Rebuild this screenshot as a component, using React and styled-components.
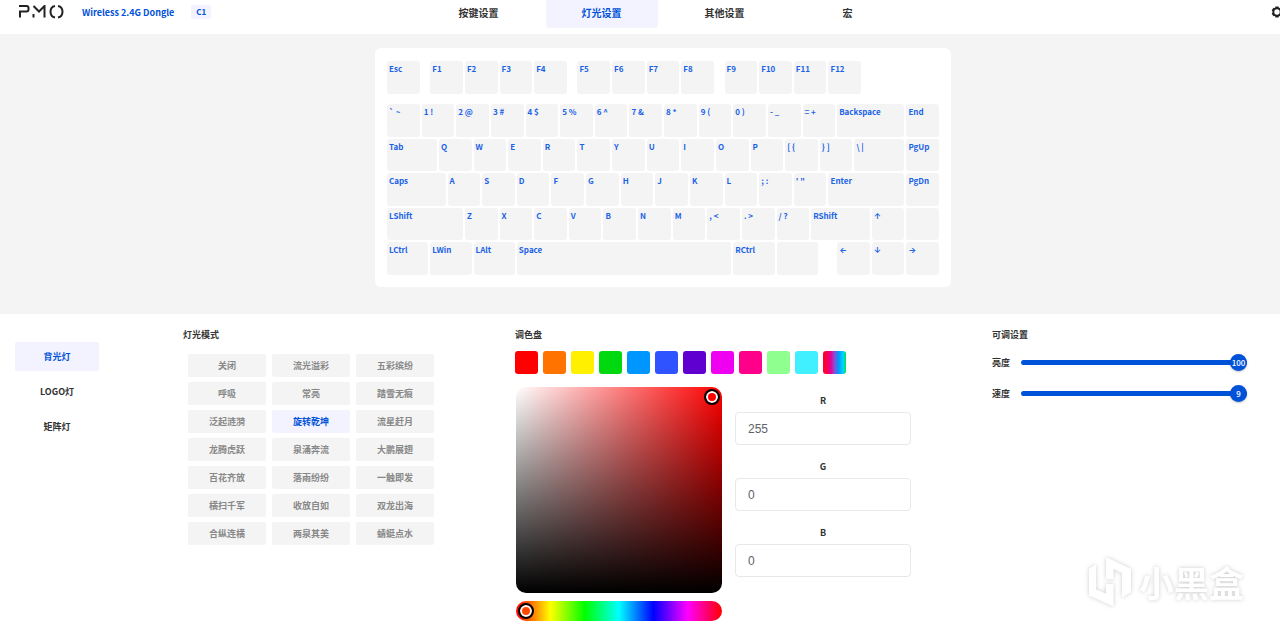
import React, { useState } from 'react'
import styled, { createGlobalStyle } from 'styled-components'

const NAV = ['按键设置', '灯光设置', '其他设置', '宏']

const ZONES = ['背光灯', 'LOGO灯', '矩阵灯']

const MODES = [
  '关闭', '流光溢彩', '五彩缤纷',
  '呼吸', '常亮', '踏雪无痕',
  '泛起涟漪', '旋转乾坤', '流星赶月',
  '龙腾虎跃', '泉涌奔流', '大鹏展翅',
  '百花齐放', '落雨纷纷', '一触即发',
  '横扫千军', '收放自如', '双龙出海',
  '合纵连横', '两泉其美', '蜻蜓点水',
]

const SWATCHES = [
  '#ff0000', '#ff7300', '#fff000', '#00d90f', '#0096ff', '#2f54ff',
  '#6000d0', '#f000f0', '#ff008a', '#8fff8f', '#40f0ff',
  'linear-gradient(90deg, #ff0030 10%, #e000a0 35%, #8a50d0 50%, #0096ff 68%, #00d8ff 88%, #00e060 98%)',
]

// [label, width in quarter units], a null label is an empty space
const FUNCTION_ROW = [
  ['Esc', 4], [null, 1], ['F1', 4], ['F2', 4], ['F3', 4], ['F4', 4],
  [null, 1], ['F5', 4], ['F6', 4], ['F7', 4], ['F8', 4],
  [null, 1], ['F9', 4], ['F10', 4], ['F11', 4], ['F12', 4], [null, 9],
]

const MAIN_ROWS = [
  ['` ~', 4], ['1 !', 4], ['2 @', 4], ['3 #', 4], ['4 $', 4], ['5 %', 4], ['6 ^', 4],
  ['7 &', 4], ['8 *', 4], ['9 (', 4], ['0 )', 4], ['- _', 4], ['= +', 4], ['Backspace', 8], ['End', 4],

  ['Tab', 6], ['Q', 4], ['W', 4], ['E', 4], ['R', 4], ['T', 4], ['Y', 4], ['U', 4],
  ['I', 4], ['O', 4], ['P', 4], ['[ {', 4], ['} ]', 4], ['\\ |', 6], ['PgUp', 4],

  ['Caps', 7], ['A', 4], ['S', 4], ['D', 4], ['F', 4], ['G', 4], ['H', 4], ['J', 4],
  ['K', 4], ['L', 4], ['; :', 4], ['\' "', 4], ['Enter', 9], ['PgDn', 4],

  ['LShift', 9], ['Z', 4], ['X', 4], ['C', 4], ['V', 4], ['B', 4], ['N', 4], ['M', 4],
  [', <', 4], ['. >', 4], ['/ ?', 4], ['RShift', 7], ['↑', 4], ['', 4],

  ['LCtrl', 5], ['LWin', 5], ['LAlt', 5], ['Space', 25], ['RCtrl', 5], ['', 5],
  [null, 2], ['←', 4], ['↓', 4], ['→', 4],
]

const Keys = ({ keys }) => keys.map(([label, span], i) => (
  label === null
    ? <Blank key={i} $span={span} />
    : (
      <Key key={i} $span={span} $arrow={'↑←↓→'.includes(label)} aria-label={label || 'unassigned'}>
        {label}
      </Key>
    )
))

const Slider = ({ id, label, max, initial }) => {
  const [value, setValue] = useState(initial)

  return (
    <SliderRow>
      <label htmlFor={id}>{label}</label>
      <Track>
        <Range
          id={id}
          type="range"
          min="0"
          max={max}
          value={value}
          onChange={e => setValue(Number(e.target.value))}
        />
        <Bubble htmlFor={id} style={{ left: `calc((100% - 17px) * ${value / max})` }}>{value}</Bubble>
      </Track>
    </SliderRow>
  )
}

const Channel = ({ name, initial }) => {
  const [value, setValue] = useState(initial)

  return (
    <Field>
      <FieldLabel htmlFor={`channel-${name}`}>{name}</FieldLabel>
      <FieldInput
        id={`channel-${name}`}
        type="text"
        value={value}
        onChange={e => setValue(e.target.value)}
      />
    </Field>
  )
}

const App = () => {
  const [tab, setTab] = useState('灯光设置')
  const [zone, setZone] = useState('背光灯')
  const [mode, setMode] = useState('旋转乾坤')

  return (
    <Page>
      <GlobalStyle />
      <Canvas>
        <Header>
          <Brand>
            <Logo viewBox="0 0 46 14" role="img" aria-label="PMO">
              <path d="M1 1H8.500Q10.500 1 10.500 3V4.500Q10.500 6.500 8.500 6.500H2V12.500" />
              <path d="M15.500 9V12.500M15.500 1L21 6.500L26.500 1V12.500" />
              <path d="M37 1Q32.500 2 32.500 6.800T37 12.600M40 1Q44.500 2 44.500 6.800T40 12.600" />
            </Logo>
            <Device>Wireless 2.4G Dongle</Device>
            <Profile>C1</Profile>
          </Brand>
          <Nav>
            {NAV.map(name => (
              <NavButton key={name} $active={name === tab} onClick={() => setTab(name)}>{name}</NavButton>
            ))}
          </Nav>
          <SettingsButton aria-label="设置">
            <svg width="12" height="12" viewBox="0 0 12 12" aria-hidden="true">
              <path
                fillRule="evenodd"
                d="M4.500 .5H7.500L8 2L9.500 1.800L11.300 4.300L10.300 6L11.300 7.700L9.500 10.200L8 10L7.500 11.500H4.500L4 10L2.500 10.200L.7 7.700L1.700 6L.7 4.300L2.500 1.800L4 2ZM6 3.300A2.700 2.700 0 1 0 6 8.700A2.700 2.700 0 1 0 6 3.300Z"
              />
            </svg>
          </SettingsButton>
        </Header>

        <KeyboardArea>
          <Board>
            <FunctionKeys><Keys keys={FUNCTION_ROW} /></FunctionKeys>
            <MainKeys><Keys keys={MAIN_ROWS} /></MainKeys>
          </Board>
        </KeyboardArea>

        <Settings>
          <ZoneList>
            {ZONES.map(name => (
              <ZoneButton key={name} $active={name === zone} onClick={() => setZone(name)}>{name}</ZoneButton>
            ))}
          </ZoneList>

          <section>
            <Title>灯光模式</Title>
            <ModeGrid>
              {MODES.map(name => (
                <ModeButton key={name} $active={name === mode} onClick={() => setMode(name)}>{name}</ModeButton>
              ))}
            </ModeGrid>
          </section>

          <section>
            <Title>调色盘</Title>
            <Swatches>
              {SWATCHES.map(color => <Swatch key={color} $color={color} aria-label={color} />)}
            </Swatches>
            <Picker>
              <div>
                <Spectrum><Cursor $color="#ff0000" $x="right" /></Spectrum>
                <Hue><Cursor $color="#ff4800" $x="left" /></Hue>
              </div>
              <Channels>
                <Channel name="R" initial="255" />
                <Channel name="G" initial="0" />
                <Channel name="B" initial="0" />
              </Channels>
            </Picker>
          </section>

          <section>
            <Title>可调设置</Title>
            <Sliders>
              <Slider id="brightness" label="亮度" max={100} initial={100} />
              <Slider id="speed" label="速度" max={9} initial={9} />
            </Sliders>
          </section>
        </Settings>
      </Canvas>

      <Watermark>
        <svg width="46" height="52" viewBox="0 0 46 52" aria-hidden="true">
          <path d="M9 8.500L2 12.500V39.500L26.500 50.500V28H19V37.500L9 33.500Z" />
          <path d="M19 1V23H26.500V13L35 17V41.500L44 36V13Z" />
        </svg>
        小黑盒
      </Watermark>
    </Page>
  )
}

const GlobalStyle = createGlobalStyle`
  * {
    box-sizing: border-box;
  }

  body {
    margin: 0;
    background: #fff;
    color: #333;
    font-family: 'Noto Sans CJK SC', sans-serif;
    font-size: 9px;
    font-weight: 700;
  }

  button, input {
    font: inherit;
  }
`

const Page = styled.div`
  position: relative;
  overflow: hidden;
`

// the layout runs a little past the right edge of the window
const Canvas = styled.div`
  width: calc(100% + 46px);
`

const Header = styled.header`
  display: grid;
  grid-template-columns: 1fr auto 1fr;
  height: 34px;
`

const Brand = styled.div`
  display: flex;
  align-items: center;
  height: 24px;
  padding-left: 18px;
`

const Logo = styled.svg`
  width: 46px;
  height: 14px;
  margin-right: 18px;
  fill: none;
  stroke: #222;
  stroke-width: 2;
`

const Device = styled.span`
  color: #0052d9;
`

const Profile = styled.span`
  margin-left: 17px;
  padding: 0 5px;
  border-radius: 2px;
  background: #f2f3ff;
  color: #0052d9;
  font-size: 8px;
  line-height: 14px;
`

const Nav = styled.nav`
  display: flex;
  gap: 11px;
`

const NavButton = styled.button`
  width: 112px;
  height: 28px;
  padding: 0 0 4px;
  border: 0;
  border-radius: 0 0 3px 3px;
  background: ${p => p.$active ? '#f2f3ff' : 'transparent'};
  color: ${p => p.$active ? '#0052d9' : '#333'};
  font-size: 10px;
`

const SettingsButton = styled.button`
  display: flex;
  align-items: center;
  justify-self: end;
  height: 24px;
  margin-right: 43px;
  padding: 0;
  border: 0;
  background: none;
  fill: #222;
`

const KeyboardArea = styled.section`
  display: flex;
  justify-content: center;
  padding: 14px 0 27px;
  background: #f4f4f4;
`

const Board = styled.div`
  width: 576px;
  padding: 13px 10px 10px 12px;
  border-radius: 6px;
  background: #fff;
`

const KeyGrid = styled.div`
  display: grid;
  grid-template-columns: repeat(64, 1fr);
`

const FunctionKeys = styled(KeyGrid)`
  grid-auto-rows: 35px;
  margin-bottom: 8px;
`

const MainKeys = styled(KeyGrid)`
  grid-template-rows: repeat(5, 1fr);
  min-height: 173px;
`

const Key = styled.button`
  grid-column: span ${p => p.$span};
  display: flex;
  margin: 0 2px 2px 0;
  padding: 2px;
  border: 0;
  border-radius: 3px;
  background: #f4f4f4;
  color: #1a62e6;
  font-family: ${p => p.$arrow ? "'Inter'" : "'Noto Sans CJK SC'"}, sans-serif;
  font-size: 8px;
  line-height: 12px;
  text-align: left;
`

const Blank = styled.span`
  grid-column: span ${p => p.$span};
`

const Settings = styled.main`
  display: grid;
  grid-template-columns: 168fr 332fr 477fr 334fr;
  padding: 14px 0 0 15px;
`

const ZoneList = styled.nav`
  display: flex;
  flex-direction: column;
  gap: 6px;
  width: 84px;
  padding-top: 14px;
`

const ZoneButton = styled.button`
  height: 29px;
  padding: 0;
  border: 0;
  border-radius: 2px;
  background: ${p => p.$active ? '#f2f3ff' : 'transparent'};
  color: ${p => p.$active ? '#0052d9' : '#333'};
`

const Title = styled.h2`
  margin: 0;
  font-size: 9px;
  line-height: 14px;
`

const ModeGrid = styled.div`
  display: grid;
  grid-template-columns: repeat(3, 78px);
  gap: 5px 6px;
  padding: 12px 0 0 5px;
`

const ModeButton = styled.button`
  height: 23px;
  padding: 0;
  border: 0;
  border-radius: 2px;
  background: ${p => p.$active ? '#f2f3ff' : '#f4f4f4'};
  color: ${p => p.$active ? '#0052d9' : '#888'};
`

const Swatches = styled.div`
  display: flex;
  gap: 5px;
  padding: 9px 0 12px;
`

const Swatch = styled.button`
  width: 23px;
  height: 23px;
  padding: 0;
  border: 0;
  border-radius: 3px;
  background: ${p => p.$color};
`

const Picker = styled.div`
  display: flex;
  gap: 13px;
  padding: 1px;
`

const Spectrum = styled.div`
  position: relative;
  width: 206px;
  height: 206px;
  border-radius: 10px;
  background:
    linear-gradient(to top, #000, transparent),
    linear-gradient(to right, #fff, #f00);
`

const Hue = styled.div`
  position: relative;
  height: 20px;
  margin-top: 8px;
  border-radius: 10px;
  background: linear-gradient(to right, #f00, #ff0, #0f0, #0ff, #00f, #f0f, #f00);
`

const Cursor = styled.span`
  position: absolute;
  top: 2px;
  ${p => p.$x}: 2px;
  width: 16px;
  height: 16px;
  border: 2px solid #000;
  border-radius: 50%;
  background: ${p => p.$color};
  box-shadow: inset 0 0 0 2px #fff;
`

const Channels = styled.div`
  display: flex;
  flex-direction: column;
  gap: 15px;
  width: 176px;
  padding-top: 7px;
`

const Field = styled.div`
  display: flex;
  flex-direction: column;
  gap: 4px;
`

const FieldLabel = styled.label`
  line-height: 14px;
  text-align: center;
`

const FieldInput = styled.input`
  height: 33px;
  padding: 0 12px;
  border: 1px solid #e8e8e8;
  border-radius: 4px;
  color: #606266;
  font: 12px 'Liberation Sans', sans-serif;
`

const Sliders = styled.div`
  display: flex;
  flex-direction: column;
  gap: 14px;
  padding-top: 12px;
`

const SliderRow = styled.div`
  display: flex;
  align-items: center;
  gap: 11px;
  height: 17px;
`

const Track = styled.div`
  position: relative;
  width: 226px;
  height: 17px;
`

const Range = styled.input`
  appearance: none;
  display: block;
  width: 100%;
  height: 17px;
  margin: 0;
  background: linear-gradient(#0052d9, #0052d9) center / 100% 5px no-repeat;
  clip-path: inset(6px 0 round 3px);

  &::-webkit-slider-thumb {
    appearance: none;
    width: 17px;
    height: 17px;
    border-radius: 50%;
    background: #0052d9;
  }
`

const Bubble = styled.output`
  position: absolute;
  top: 0;
  width: 17px;
  border-radius: 50%;
  background: #0052d9;
  box-shadow: 0 1px 2px rgba(0, 0, 0, 0.25);
  color: #fff;
  font-size: 8px;
  font-weight: 500;
  line-height: 17px;
  text-align: center;
  pointer-events: none;
`

const Watermark = styled.div`
  position: absolute;
  right: 36px;
  bottom: 14px;
  display: flex;
  align-items: center;
  gap: 6px;
  color: #fff;
  font-size: 35px;
  line-height: 52px;
  pointer-events: none;
  filter: drop-shadow(0 0 2px rgba(0, 0, 0, 0.2));

  svg {
    fill: #fff;
  }
`

export default App
